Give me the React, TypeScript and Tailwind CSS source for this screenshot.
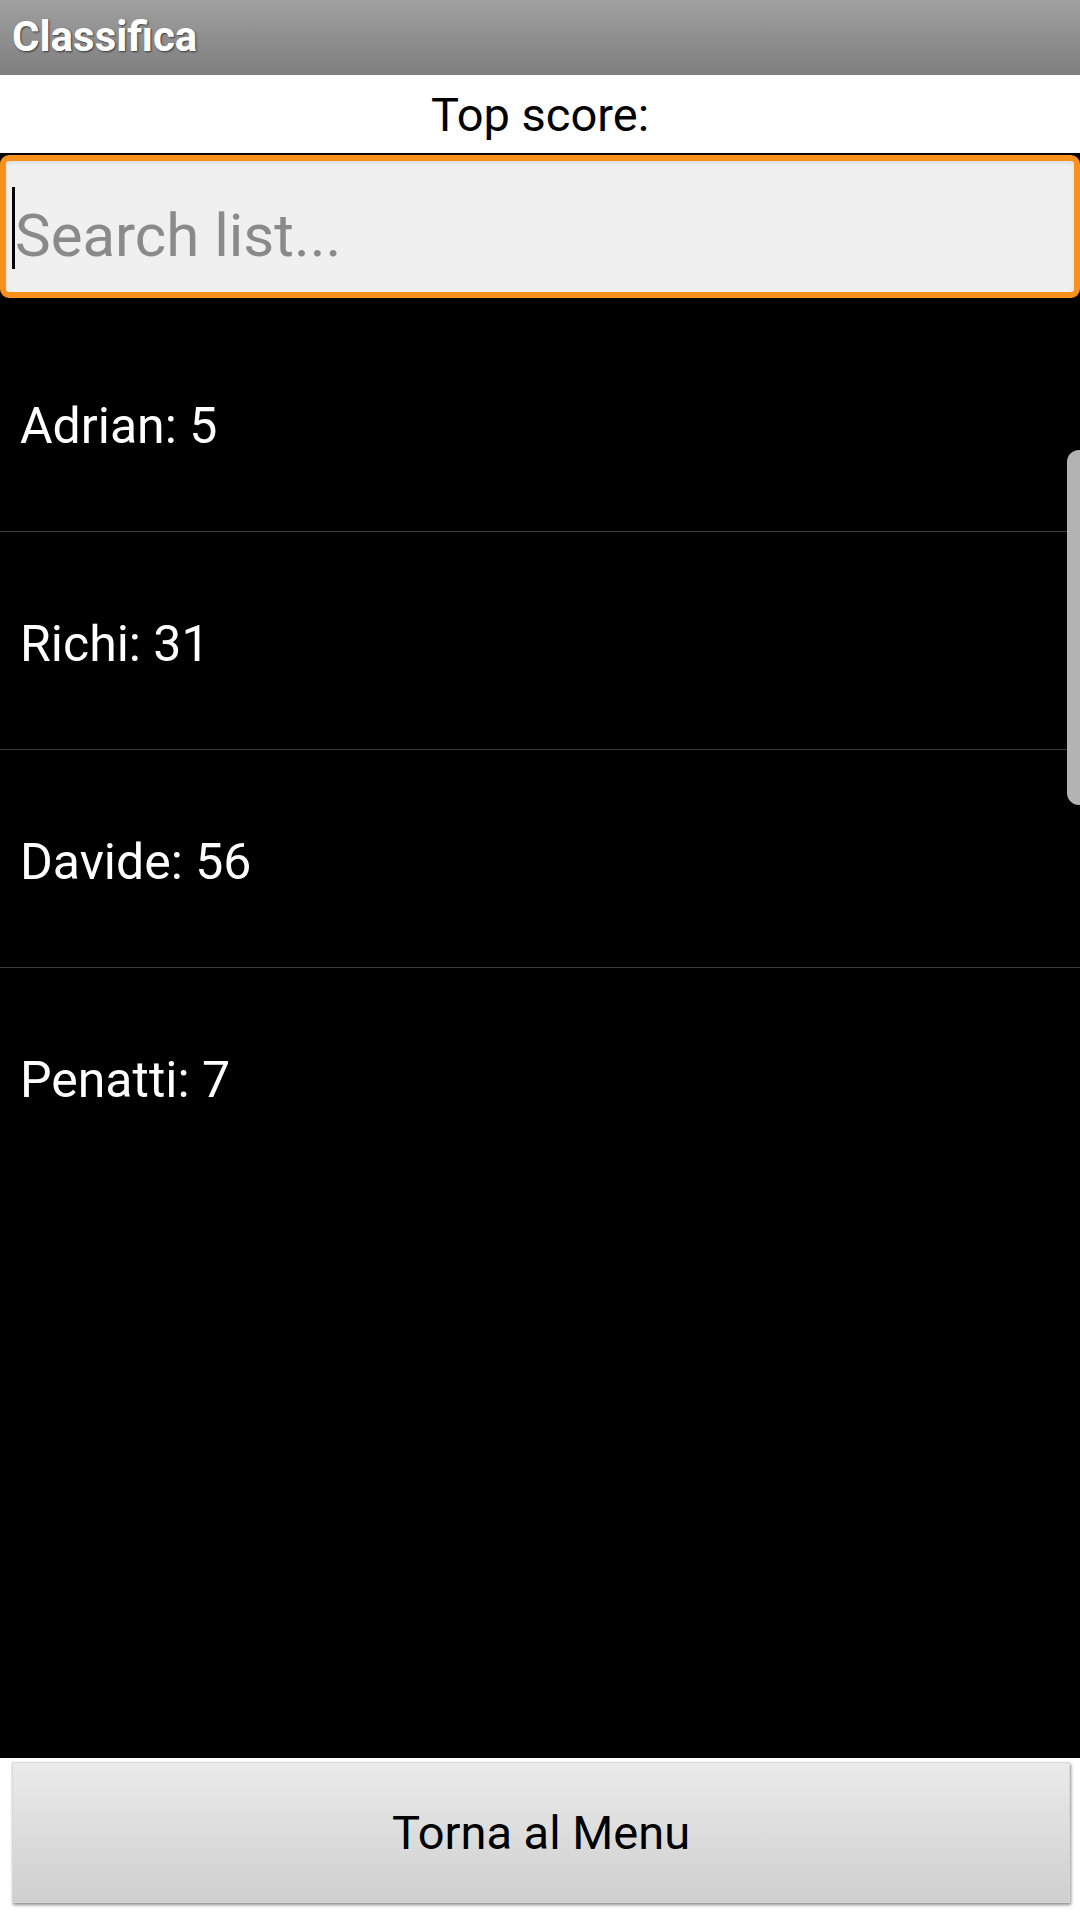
const scores = [
  { name: 'Adrian', score: 5 },
  { name: 'Richi', score: 31 },
  { name: 'Davide', score: 56 },
  { name: 'Penatti', score: 7 },
]

export default function App() {
  return (
    <div
      className="w-[1080px] h-[1920px] flex flex-col bg-black overflow-hidden"
      style={{ fontFamily: 'Roboto, "Noto Sans", sans-serif' }}
    >
      {/* Title bar */}
      <div className="h-[75px] shrink-0 flex items-center pl-[12px] bg-gradient-to-b from-[#a0a0a0] to-[#7f7f7f]">
        <span className="text-white font-bold text-[42px] leading-none [text-shadow:1px_1px_2px_rgba(0,0,0,0.6)] -mt-[1px]">
          Classifica
        </span>
      </div>

      {/* Header label */}
      <div className="h-[78px] shrink-0 bg-white flex items-center justify-center">
        <span className="text-black text-[47px] leading-none">Top score:</span>
      </div>

      {/* Search */}
      <div className="shrink-0 bg-black pt-[2px]">
        <div className="h-[143px] rounded-[9px] border-[6px] border-[#f7911c] bg-[#f0f0f0] flex items-center pl-[6px] pt-[18px] shadow-[inset_0_2px_4px_rgba(0,0,0,0.08)]">
          <div className="w-[3px] h-[82px] bg-black -mt-[16px]" />
          <span className="text-[#8a8a8a] text-[60px] leading-none">Search list...</span>
        </div>
      </div>

      {/* List */}
      <div className="relative flex-1 bg-black pt-[16px]">
        {scores.map((s, i) => (
          <div
            key={s.name}
            className={`h-[218px] flex items-center pl-[20px] pt-[6px] ${i < scores.length - 1 ? 'border-b border-[#3a3a3a]' : ''}`}
          >
            <span className="text-white text-[50px] leading-none">
              {s.name}: {s.score}
            </span>
          </div>
        ))}
        {/* scrollbar */}
        <div className="absolute right-0 top-[152px] w-[13px] h-[355px] bg-[#b3b3b3] rounded-l-[12px]" />
      </div>

      {/* Bottom button */}
      <div className="h-[162px] shrink-0 bg-white pt-[4px] px-[12px]">
        <button className="w-[1058px] h-[141px] bg-gradient-to-b from-[#ebebeb] to-[#cfcfcf] shadow-[1px_2px_3px_rgba(0,0,0,0.45)] border border-[#d8d8d8] flex items-center justify-center">
          <span className="text-black text-[47px] leading-none">Torna al Menu</span>
        </button>
      </div>
    </div>
  )
}
